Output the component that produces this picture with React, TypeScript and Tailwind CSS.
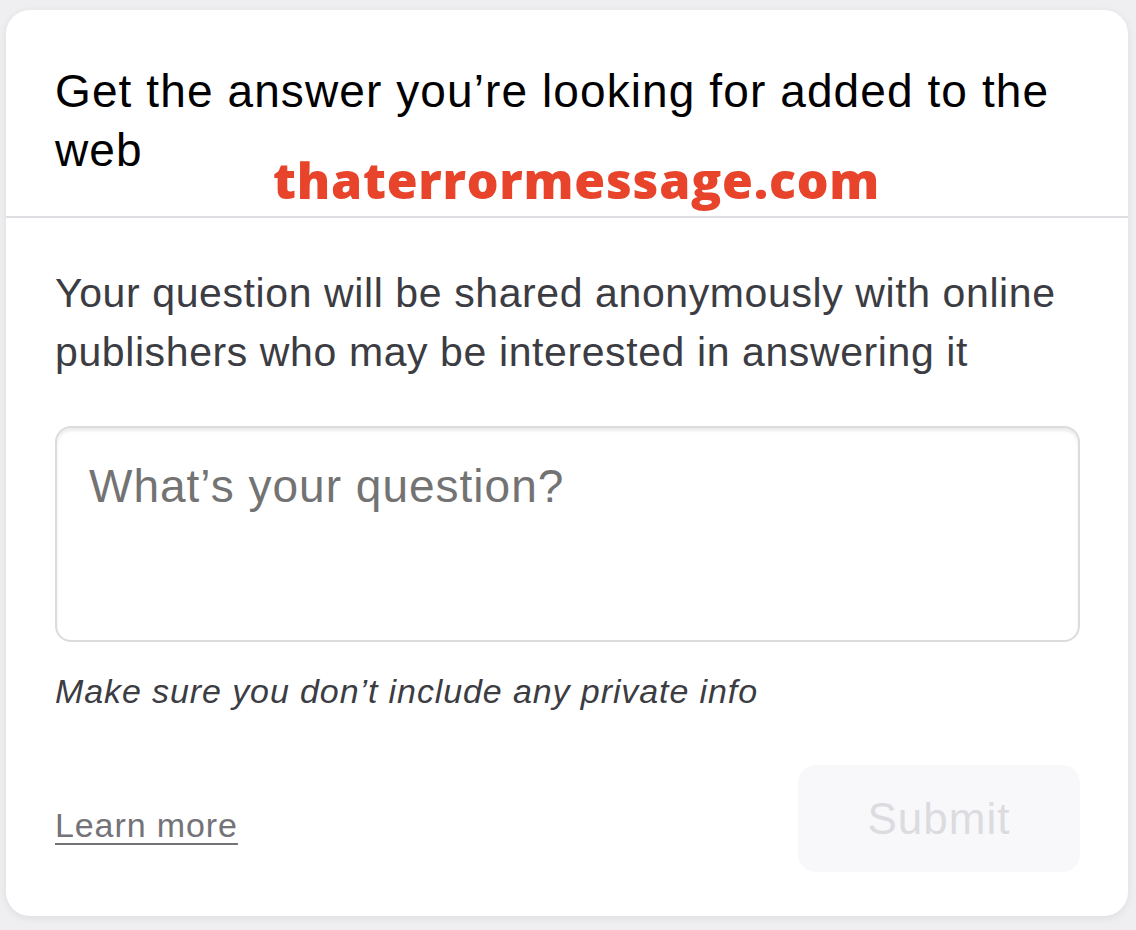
export default function App() {
  return (
    <div
      className="min-h-[930px] w-full bg-[#efeff1] pt-[10px] pb-[15px] pl-[6px] pr-[8px]"
      style={{ fontFamily: '"Liberation Sans", Arial, sans-serif' }}
    >
      <div className="relative overflow-hidden rounded-[24px] bg-white shadow-[0_2px_8px_rgba(0,0,0,0.08)]">
        {/* header */}
        <div className="border-b-2 border-[#dedee2] pl-[49px] pr-[40px] pt-[52px] pb-[36px]">
          <h1 className="text-[46px] leading-[59px] font-normal tracking-[1.1px] text-black">
            Get the answer you’re looking for added to the web
          </h1>
        </div>

        {/* watermark */}
        <div
          className="pointer-events-none absolute left-[267px] top-[148px] text-[50px] leading-[44px] font-extrabold tracking-[0.75px] text-[#e8432b]"
          style={{ fontFamily: '"Open Sans", sans-serif' }}
        >
          thaterrormessage.com
        </div>

        {/* body */}
        <div className="pl-[49px] pr-[40px] pt-[46px] pb-[44px]">
          <p className="text-[41px] leading-[59px] tracking-[0.6px] text-[#3c3c43]">
            Your question will be shared anonymously with online publishers who may be interested in answering it
          </p>

          <textarea
            placeholder="What’s your question?"
            className="mt-[44px] block h-[216px] w-[1025px] resize-none rounded-[16px] border-2 border-[#dcdcdf] px-[32px] pt-[30px] text-[46px] leading-[56px] tracking-[1px] text-[#333] shadow-[inset_0_3px_3px_rgba(0,0,0,0.08)] outline-none placeholder:text-[#737373]"
            style={{ fontFamily: '"Liberation Sans", Arial, sans-serif' }}
          />

          <p className="mt-[29px] text-[34px] leading-[40px] italic tracking-[0.9px] text-[#3c3c43]">
            Make sure you don’t include any private info
          </p>

          <div className="mt-[54px] flex w-[1025px] items-center justify-between">
            <a
              href="#"
              className="mt-[12px] text-[34px] leading-[40px] tracking-[0.9px] text-[#737378] underline decoration-2 underline-offset-[6px]"
            >
              Learn more
            </a>
            <button
              disabled
              className="h-[107px] w-[282px] rounded-[18px] bg-[#f8f8fa] text-[44px] tracking-[1px] text-[#dcdce0]"
            >
              Submit
            </button>
          </div>
        </div>
      </div>
    </div>
  );
}
